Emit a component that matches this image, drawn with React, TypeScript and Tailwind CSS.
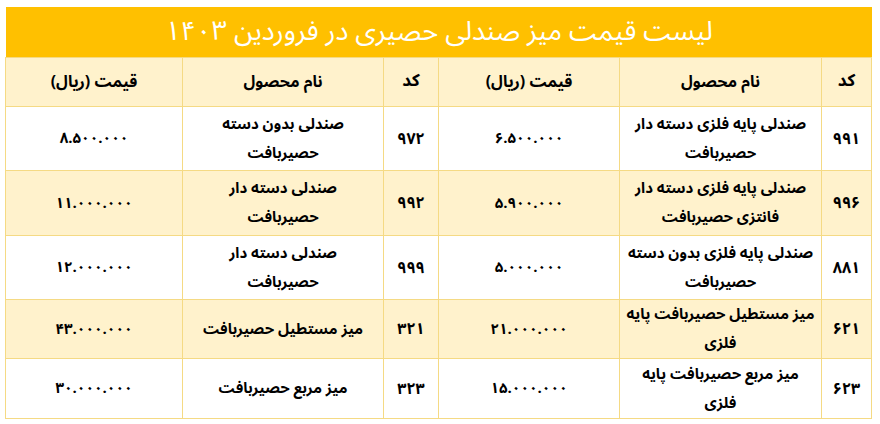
import React from 'react';

interface Item {
  code: string;
  name: string[];
  price: string;
}

interface Row {
  right: Item;
  left: Item;
}

// right half of the sheet is the first three columns in rtl order
const rows: Row[] = [
  {
    right: { code: '۹۹۱', name: ['صندلی پایه فلزی دسته دار', 'حصیربافت'], price: '۶.۵۰۰.۰۰۰' },
    left: { code: '۹۷۲', name: ['صندلی بدون دسته', 'حصیربافت'], price: '۸.۵۰۰.۰۰۰' },
  },
  {
    right: { code: '۹۹۶', name: ['صندلی پایه فلزی دسته دار', 'فانتزی حصیربافت'], price: '۵.۹۰۰.۰۰۰' },
    left: { code: '۹۹۲', name: ['صندلی دسته دار', 'حصیربافت'], price: '۱۱.۰۰۰.۰۰۰' },
  },
  {
    right: { code: '۸۸۱', name: ['صندلی پایه فلزی بدون دسته', 'حصیربافت'], price: '۵.۰۰۰.۰۰۰' },
    left: { code: '۹۹۹', name: ['صندلی دسته دار', 'حصیربافت'], price: '۱۲.۰۰۰.۰۰۰' },
  },
  {
    right: { code: '۶۲۱', name: ['میز مستطیل حصیربافت پایه', 'فلزی'], price: '۲۱.۰۰۰.۰۰۰' },
    left: { code: '۳۲۱', name: ['میز مستطیل حصیربافت'], price: '۴۳.۰۰۰.۰۰۰' },
  },
  {
    right: { code: '۶۲۳', name: ['میز مربع حصیربافت پایه', 'فلزی'], price: '۱۵.۰۰۰.۰۰۰' },
    left: { code: '۳۲۳', name: ['میز مربع حصیربافت'], price: '۳۰.۰۰۰.۰۰۰' },
  },
];

const rowHeights = ['h-[64px]', 'h-[65px]', 'h-[64px]', 'h-[58px]', 'h-[60px]'];

const cell = 'border border-[#f5da84] text-center align-middle';

const ItemCells = ({ item }: { item: Item }) => (
  <>
    <td className={`${cell} text-[16px]`}>{item.code}</td>
    <td className={`${cell} text-[15px] leading-[29px]`}>
      {item.name.map((line, i) => (
        <div key={i}>{line}</div>
      ))}
    </td>
    <td className={`${cell} text-[15px]`}>{item.price}</td>
  </>
);

const HeaderCells = () => (
  <>
    <th className={`${cell} text-[17px]`}>کد</th>
    <th className={`${cell} text-[16px]`}>نام محصول</th>
    <th className={`${cell} text-[16px]`}>قیمت (ریال)</th>
  </>
);

export default function App() {
  return (
    <div
      className="w-[880px] h-[424px] bg-white pt-[7px] pl-[6px]"
      style={{ fontFamily: '"Noto Sans Arabic", "DejaVu Sans", sans-serif' }}
    >
      <div dir="rtl" className="w-[866px]">
        <div className="h-[50px] bg-[#ffc000] flex items-center justify-center text-white text-[27px] font-normal">
          لیست قیمت میز صندلی حصیری در فروردین ۱۴۰۳
        </div>
        <table className="w-full table-fixed border-collapse font-bold text-black">
          <colgroup>
            <col className="w-[50px]" />
            <col className="w-[202px]" />
            <col className="w-[181px]" />
            <col className="w-[55px]" />
            <col className="w-[201px]" />
            <col className="w-[177px]" />
          </colgroup>
          <thead>
            <tr className="h-[49px] bg-[#fff2cc]">
              <HeaderCells />
              <HeaderCells />
            </tr>
          </thead>
          <tbody>
            {rows.map((row, i) => (
              <tr key={i} className={`${rowHeights[i]} ${i % 2 === 1 ? 'bg-[#fff2cc]' : 'bg-white'}`}>
                <ItemCells item={row.right} />
                <ItemCells item={row.left} />
              </tr>
            ))}
          </tbody>
        </table>
      </div>
    </div>
  );
}
